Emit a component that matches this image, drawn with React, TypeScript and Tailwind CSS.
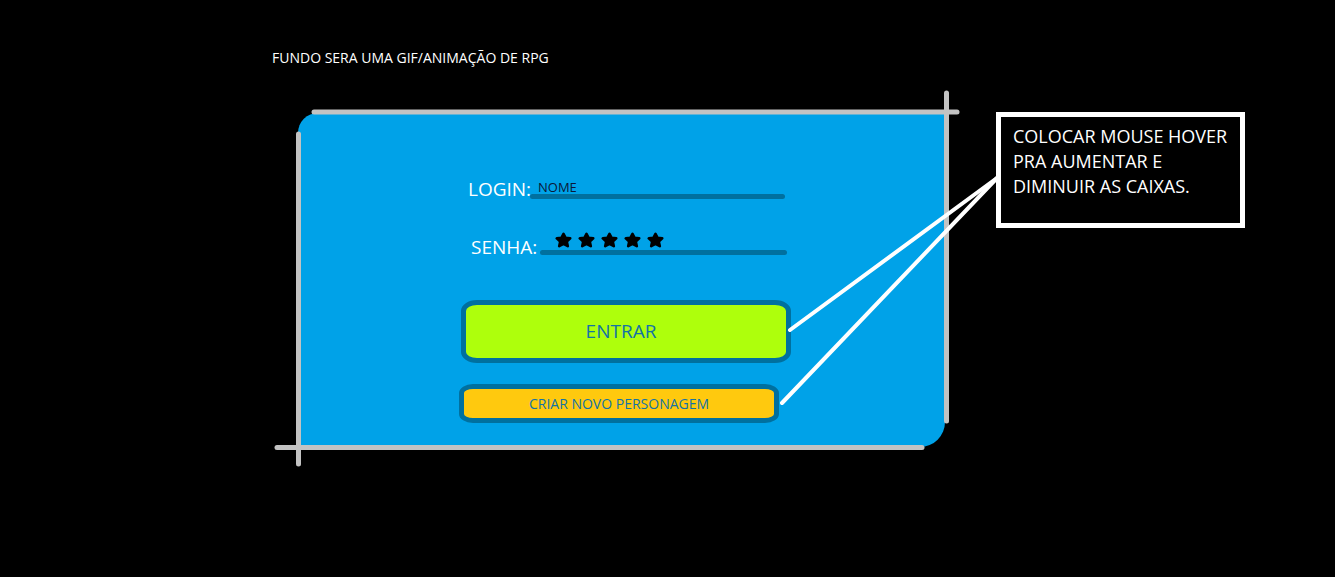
import React from 'react';

const Star = () => (
    <svg width="17" height="16" viewBox="0 0 17 16">
        <polygon
            points="8.5,1.8 10.6,5.9 15.2,6.4 11.8,9.6 12.8,14.2 8.5,11.9 4.2,14.2 5.2,9.6 1.8,6.4 6.4,5.9"
            fill="#000"
            stroke="#000"
            strokeWidth="2.6"
            strokeLinejoin="round"
        />
    </svg>
);

const App = () => {
    return (
        <div className="relative w-[1335px] h-[577px] bg-black overflow-hidden font-['Open_Sans',sans-serif]">
            {/* ---top note-------- */}
            <p className="pl-[272px] pt-[49px] text-[14px] leading-[18px] text-white">FUNDO SERA UMA GIF/ANIMAÇÃO DE RPG</p>

            <div className="flex items-start pl-[298px] mt-[46px]">
                {/* ---login panel-------- */}
                <div className="w-[647px] h-[334px] bg-[#00a2e8] rounded-tl-[20px] rounded-br-[25px] flex flex-col items-start pl-[161px] pt-[63px]">
                    <div className="flex items-start ml-[9px]">
                        <span className="w-[62px] text-[19px] leading-[26px] text-white">LOGIN:</span>
                        <div className="w-[255px] pt-[5px]">
                            <div className="pl-[8px] text-[13px] leading-[13px] text-[#0a1838]">NOME</div>
                            <div className="h-[5px] rounded-full bg-[#00709f]" />
                        </div>
                    </div>

                    <div className="flex items-start ml-[12px] mt-[32px]">
                        <span className="w-[69px] text-[19px] leading-[26px] text-white">SENHA:</span>
                        <div className="w-[247px] -mt-[2px]">
                            <div className="flex gap-[6px] pl-[15px] h-[16px]">
                                <Star /><Star /><Star /><Star /><Star />
                            </div>
                            <div className="h-[5px] mt-[2px] rounded-full bg-[#00709f]" />
                        </div>
                    </div>

                    <button className="ml-[2px] mt-[40px] w-[330px] h-[63px] bg-[#aeff0c] border-[5px] border-[#00709f] rounded-[16px/11px] pr-[10px] text-[19px] text-[#1373a6] flex items-center justify-center">
                        ENTRAR
                    </button>

                    <button className="mt-[21px] w-[320px] h-[39px] bg-[#ffc90e] border-[5px] border-[#00709f] rounded-[14px/9px] text-[14px] text-[#1373a6] flex items-center justify-center">
                        CRIAR NOVO PERSONAGEM
                    </button>
                </div>

                {/* ---hover note box-------- */}
                <div className="ml-[51px] -mt-[1px] w-[249px] h-[116px] border-[5px] border-white bg-black pl-[12px] pt-[7px] text-[18px] leading-[25px] text-white whitespace-nowrap">
                    COLOCAR MOUSE HOVER<br />PRA AUMENTAR E<br />DIMINUIR AS CAIXAS.
                </div>
            </div>

            {/* ---sketch strokes-------- */}
            <svg className="absolute inset-0 pointer-events-none" width="1335" height="577">
                <g stroke="#c3c3c3" strokeWidth="5" strokeLinecap="round">
                    <line x1="314" y1="112" x2="957" y2="112" />
                    <line x1="298.5" y1="134" x2="298.5" y2="464" />
                    <line x1="946.5" y1="93" x2="946.5" y2="421" />
                    <line x1="277" y1="447.5" x2="922" y2="447.5" />
                </g>
                <g stroke="#fff" strokeWidth="4" strokeLinecap="round">
                    <line x1="790" y1="330" x2="997" y2="178" />
                    <line x1="782" y1="403" x2="997" y2="178" />
                </g>
            </svg>
        </div>
    );
};
export default App;
